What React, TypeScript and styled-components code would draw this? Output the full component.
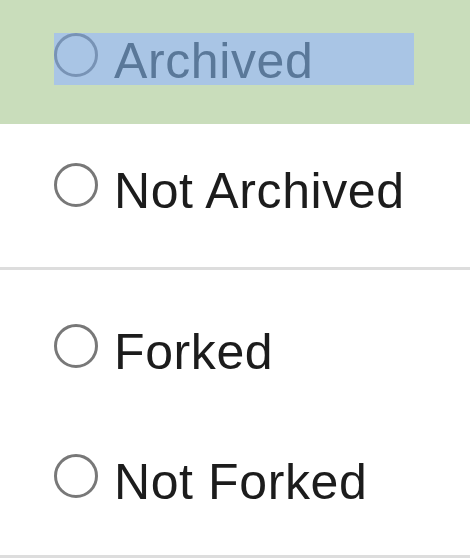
import React from 'react'
import styled, { createGlobalStyle } from 'styled-components'

const GlobalStyle = createGlobalStyle`
  html, body {
    margin: 0;
    padding: 0;
    background: #ffffff;
  }
  body {
    font-family: 'Liberation Sans', Arial, sans-serif;
    overflow: hidden;
  }
`

const groups = [
  [
    { id: 'archived', label: 'Archived', active: true },
    { id: 'not-archived', label: 'Not Archived', active: false },
  ],
  [
    { id: 'forked', label: 'Forked', active: false },
    { id: 'not-forked', label: 'Not Forked', active: false },
  ],
]

const List = styled.div`
  display: flex;
  flex-direction: column;
  width: 470px;
  margin-top: -6px;
`

const Group = styled.div<{ $first?: boolean }>`
  display: flex;
  flex-direction: column;
  padding: ${(p) => (p.$first ? '0 0 13px' : '15px 0 10px')};
  border-bottom: 3px solid #dddddd;
`

const Item = styled.label<{ $active?: boolean }>`
  display: flex;
  align-items: center;
  height: 130px;
  padding-left: 54px;
  background: ${(p) => (p.$active ? '#c9ddbb' : 'transparent')};
  cursor: pointer;
`

const Selection = styled.span<{ $selected?: boolean }>`
  display: flex;
  align-items: flex-start;
  gap: 16px;
  height: 52px;
  width: ${(p) => (p.$selected ? '360px' : 'auto')};
  background: ${(p) => (p.$selected ? '#a9c5e5' : 'transparent')};
`

const Radio = styled.span<{ $selected?: boolean }>`
  flex: none;
  box-sizing: border-box;
  width: 44px;
  height: 44px;
  border-radius: 50%;
  border: 3px solid ${(p) => (p.$selected ? '#7893b5' : '#787878')};
`

const Label = styled.span<{ $selected?: boolean }>`
  padding-top: 2px;
  font-size: 50px;
  line-height: 52px;
  letter-spacing: 0.6px;
  color: ${(p) => (p.$selected ? '#5a7899' : '#1c1c1c')};
  white-space: nowrap;
`

export default function App() {
  return (
    <>
      <GlobalStyle />
      <List>
        {groups.map((items, gi) => (
          <Group key={gi} $first={gi === 0}>
            {items.map((item) => (
              <Item key={item.id} $active={item.active}>
                <Selection $selected={item.active}>
                  <Radio $selected={item.active} />
                  <Label $selected={item.active}>{item.label}</Label>
                </Selection>
              </Item>
            ))}
          </Group>
        ))}
      </List>
    </>
  )
}
